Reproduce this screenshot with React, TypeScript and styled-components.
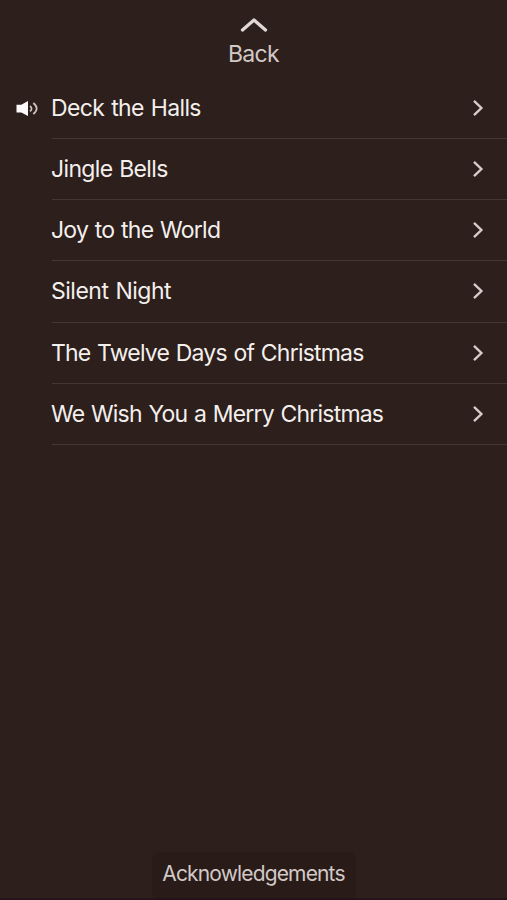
import React from "react";
import styled, { createGlobalStyle } from "styled-components";

const Global = createGlobalStyle`
  * { box-sizing: border-box; }
  body { margin: 0; background: #2c1f1c; font-family: Inter, "Liberation Sans", sans-serif; }
`;

const PlainButton = styled.button`
  font-family: inherit;
  border: 0;
  padding: 0;
  background: none;
  color: #d2c9c7;
  cursor: pointer;
`;

const Screen = styled.main`
  height: 900px;
  display: flex;
  flex-direction: column;
  background: #2c1f1c;
  border-bottom: 2px solid #24141a;
  overflow: hidden;
`;

const BackButton = styled(PlainButton)`
  display: flex;
  flex-direction: column;
  align-items: center;
  align-self: center;
  height: 78px;
  padding-top: 16px;
`;

const BackLabel = styled.span`
  margin-top: 7px;
  font-size: 23px;
  line-height: 28px;
  letter-spacing: -0.65px;
`;

const SongList = styled.ul`
  list-style: none;
  margin: 0;
  padding: 0;
`;

const SongRow = styled.li`
  display: flex;
  height: 61.15px;
`;

const Status = styled.div`
  width: 52px;
  padding-left: 15px;
  display: flex;
  align-items: center;
`;

const SongBody = styled.div`
  flex: 1;
  display: flex;
  align-items: center;
  justify-content: space-between;
  padding-right: 23px;
  border-bottom: 1px solid #433633;
`;

const SongTitle = styled.span<{ $tracking: number }>`
  margin-left: -1px;
  font-size: 23px;
  line-height: 28px;
  color: #f4efed;
  white-space: nowrap;
  word-spacing: 1px;
  letter-spacing: ${(p) => p.$tracking}px;
`;

const Footer = styled.footer`
  margin-top: auto;
  display: flex;
  justify-content: center;
`;

const Acknowledgements = styled(PlainButton)`
  width: 204px;
  height: 46px;
  padding-bottom: 4px;
  border-radius: 6px;
  background: #291b18;
  font-size: 21px;
  letter-spacing: -0.85px;
`;

const songs = [
  { title: "Deck the Halls", tracking: -0.62, playing: true },
  { title: "Jingle Bells", tracking: -0.66 },
  { title: "Joy to the World", tracking: -0.76 },
  { title: "Silent Night", tracking: -0.5 },
  { title: "The Twelve Days of Christmas", tracking: -0.8 },
  { title: "We Wish You a Merry Christmas", tracking: -0.8 },
];

const Chevron = () => (
  <svg width="12" height="18" viewBox="0 0 12 18" fill="none" stroke="#d6ccca" strokeWidth="2.4">
    <path d="M2 1.800l7.400 7.200L2 16.200" />
  </svg>
);

const Speaker = () => (
  <svg width="24" height="18" viewBox="0 0 24 18" fill="none" stroke="#d0c5c2">
    <path d="M1.500 4.700h4.800L13 1v15L6.300 12.500H1.500z" fill="#fffafa" stroke="none" />
    <path d="M15 6q3.200 2.700 0 5.400M18.300 3q6.800 5.500 0 11" strokeWidth="1.7" />
  </svg>
);

export default function App() {
  return (
    <>
      <Global />
      <Screen>
        <BackButton>
          <svg width="32" height="17" viewBox="0 0 32 17" fill="none" stroke="#e0d8d5" strokeWidth="3.3" strokeLinecap="round" strokeLinejoin="round">
            <path d="M5.500 14L17 4l11.500 10" />
          </svg>
          <BackLabel>Back</BackLabel>
        </BackButton>
        <SongList>
          {songs.map((s) => (
            <SongRow key={s.title}>
              <Status>{s.playing && <Speaker />}</Status>
              <SongBody>
                <SongTitle $tracking={s.tracking}>{s.title}</SongTitle>
                <Chevron />
              </SongBody>
            </SongRow>
          ))}
        </SongList>
        <Footer>
          <Acknowledgements>Acknowledgements</Acknowledgements>
        </Footer>
      </Screen>
    </>
  );
}
